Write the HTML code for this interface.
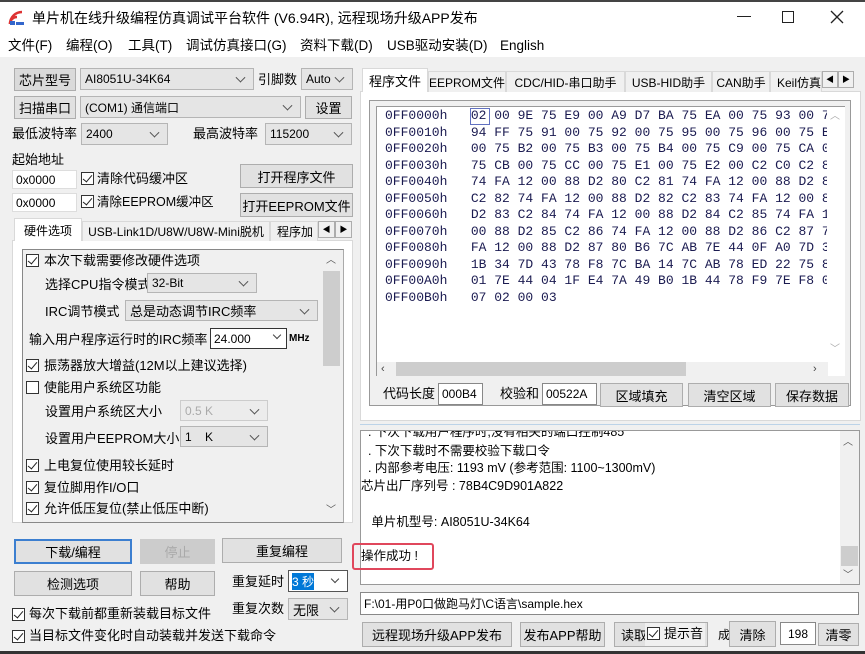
<!DOCTYPE html>
<html><head><meta charset="utf-8"><style>
*{box-sizing:border-box;margin:0;padding:0}
body{width:865px;height:654px;overflow:hidden;background:#f0f0f0;font-family:"Liberation Sans","Noto Sans CJK SC",sans-serif;font-size:13px;color:#000;position:relative}
.a{position:absolute;white-space:nowrap;line-height:18px}
.btn{position:absolute;background:#e1e1e1;border:1px solid #adadad;text-align:center;font-size:13px;display:flex;align-items:center;justify-content:center}
.cb{position:absolute;background:#e5e5e5;border:1px solid #b5b5b5;font-size:12px;padding-left:4px;display:flex;align-items:center}
.cb::after{content:"";position:absolute;right:9px;top:50%;width:6px;height:6px;border-right:1px solid #555;border-bottom:1px solid #555;transform:translateY(-70%) rotate(45deg)}
.in{position:absolute;background:#fff;border:1px solid #7a7a7a;font-size:12px;padding-left:3px;display:flex;align-items:center}
.chk{position:absolute;width:13px;height:13px;border:1px solid #333;background:#fff}
.chk.on::after{content:"";position:absolute;left:3px;top:0px;width:4px;height:8px;border-right:1.5px solid #222;border-bottom:1.5px solid #222;transform:rotate(40deg)}
.tab{position:absolute;border:1px solid #d9d9d9;border-bottom:none;background:#f0f0f0;font-size:12px;display:flex;align-items:center;justify-content:center}
.mono{font-family:"Liberation Mono",monospace;font-size:13px;color:#1a1a50}
.m{font-size:13.5px;top:37px}
</style></head><body>
<div class="a" style="left:0;top:0;width:865px;height:57px;background:#fff;border-top:2px solid #444"></div>
<svg class="a" style="left:8px;top:10px" width="18" height="16"><path d="M2 14 A12 12 0 0 1 14 2" stroke="#d33" stroke-width="2.5" fill="none"/><path d="M2 14 A7 7 0 0 1 9 7" stroke="#d33" stroke-width="2.5" fill="none"/><rect x="2" y="11" width="5" height="4" fill="#36c"/><rect x="8" y="12" width="8" height="3" fill="#36c"/></svg>
<div class="a" style="left:32px;top:9px;font-size:14px">单片机在线升级编程仿真调试平台软件 (V6.94R), 远程现场升级APP发布</div>
<div class="a" style="left:737px;top:16px;width:14px;height:1.3px;background:#222"></div>
<div class="a" style="left:782px;top:11px;width:12px;height:12px;border:1.3px solid #222"></div>
<svg class="a" style="left:830px;top:10px" width="14" height="14"><path d="M1 1L13 13M13 1L1 13" stroke="#222" stroke-width="1.3"/></svg>
<div class="a m" style="left:8px">文件(F)</div>
<div class="a m" style="left:66px">编程(O)</div>
<div class="a m" style="left:128px">工具(T)</div>
<div class="a m" style="left:186px">调试仿真接口(G)</div>
<div class="a m" style="left:300px">资料下载(D)</div>
<div class="a m" style="left:387px">USB驱动安装(D)</div>
<div class="a m" style="left:500px;top:37px">English</div>

<div class="btn" style="left:14px;top:68px;width:62px;height:23px;background:#dadada">芯片型号</div>
<div class="cb" style="left:80px;top:68px;width:174px;height:22px">AI8051U-34K64</div>
<div class="a" style="left:258px;top:71px">引脚数</div>
<div class="cb" style="left:301px;top:68px;width:52px;height:22px">Auto</div>
<div class="btn" style="left:14px;top:96px;width:62px;height:23px">扫描串口</div>
<div class="cb" style="left:80px;top:96px;width:221px;height:22px">(COM1) 通信端口</div>
<div class="btn" style="left:305px;top:96px;width:47px;height:23px">设置</div>
<div class="a" style="left:12px;top:125px">最低波特率</div>
<div class="cb" style="left:81px;top:123px;width:87px;height:22px">2400</div>
<div class="a" style="left:193px;top:125px">最高波特率</div>
<div class="cb" style="left:265px;top:123px;width:87px;height:22px">115200</div>
<div class="a" style="left:12px;top:151px">起始地址</div>
<div class="in" style="left:12px;top:170px;width:65px;height:19px;border-color:#ddd">0x0000</div>
<div class="chk on" style="left:81px;top:172px"></div>
<div class="a" style="left:97px;top:170px">清除代码缓冲区</div>
<div class="btn" style="left:240px;top:164px;width:113px;height:24px">打开程序文件</div>
<div class="in" style="left:12px;top:193px;width:65px;height:19px;border-color:#ddd">0x0000</div>
<div class="chk on" style="left:81px;top:195px"></div>
<div class="a" style="left:97px;top:193px;font-size:12.5px">清除EEPROM缓冲区</div>
<div class="btn" style="left:240px;top:193px;width:113px;height:24px">打开EEPROM文件</div>

<div class="a" style="left:12px;top:240px;width:341px;height:283px;background:#fff;border:1px solid #d9d9d9"></div>
<div class="tab" style="left:14px;top:218px;width:68px;height:23px;background:#fff;z-index:2">硬件选项</div>
<div class="tab" style="left:82px;top:221px;width:188px;height:20px">USB-Link1D/U8W/U8W-Mini脱机</div>
<div class="tab" style="left:270px;top:221px;width:48px;height:20px;justify-content:flex-start;padding-left:6px;overflow:hidden">程序加</div>
<div class="btn" style="left:318px;top:221px;width:17px;height:17px;font-size:8px;background:#f0f0f0">◀</div>
<div class="btn" style="left:335px;top:221px;width:17px;height:17px;font-size:8px;background:#f0f0f0">▶</div>
<div class="a" style="left:22px;top:249px;width:322px;height:274px;border:1px solid #888;border-right-color:#aaa;background:#f0f0f0"></div>
<div class="a" style="left:321px;top:250px;width:22px;height:272px;background:#f0f0f0"></div>
<div class="a" style="left:323px;top:271px;width:17px;height:95px;background:#cdcdcd"></div>
<div class="a" style="left:326px;top:252px;font-size:10px;color:#555">︿</div>
<div class="a" style="left:326px;top:502px;font-size:10px;color:#555">﹀</div>
<div class="chk on" style="left:26px;top:254px"></div><div class="a" style="left:44px;top:252px">本次下载需要修改硬件选项</div>
<div class="a" style="left:45px;top:276px">选择CPU指令模式</div>
<div class="cb" style="left:147px;top:273px;width:110px;height:20px">32-Bit</div>
<div class="a" style="left:45px;top:303px">IRC调节模式</div>
<div class="cb" style="left:125px;top:300px;width:193px;height:21px;font-size:13px">总是动态调节IRC频率</div>
<div class="a" style="left:29px;top:331px">输入用户程序运行时的IRC频率</div>
<div class="in" style="left:210px;top:328px;width:77px;height:21px;border-color:#333;background:#fff">24.000</div>
<div class="a" style="left:274px;top:332px;width:6px;height:6px;border-right:1px solid #444;border-bottom:1px solid #444;transform:rotate(45deg)"></div>
<div class="a" style="left:289px;top:330px;font-size:10px;font-weight:bold">MHz</div>
<div class="chk on" style="left:26px;top:359px"></div><div class="a" style="left:44px;top:357px">振荡器放大增益(12M以上建议选择)</div>
<div class="chk" style="left:26px;top:381px"></div><div class="a" style="left:44px;top:379px">使能用户系统区功能</div>
<div class="a" style="left:45px;top:403px">设置用户系统区大小</div>
<div class="cb" style="left:180px;top:400px;width:88px;height:21px;color:#aaa;background:#ececec;border-color:#ccc">0.5 K</div>
<div class="a" style="left:45px;top:430px">设置用户EEPROM大小</div>
<div class="cb" style="left:180px;top:426px;width:88px;height:21px">1 &nbsp;&nbsp;&nbsp;K</div>
<div class="chk on" style="left:26px;top:459px"></div><div class="a" style="left:44px;top:457px">上电复位使用较长延时</div>
<div class="chk on" style="left:26px;top:481px"></div><div class="a" style="left:44px;top:479px">复位脚用作I/O口</div>
<div class="chk on" style="left:26px;top:502px"></div><div class="a" style="left:44px;top:500px">允许低压复位(禁止低压中断)</div>

<div class="btn" style="left:14px;top:539px;width:118px;height:25px;border:2px solid #3c7fd0">下载/编程</div>
<div class="btn" style="left:140px;top:539px;width:75px;height:25px;color:#aaa;background:#ccc;border-color:#ccc">停止</div>
<div class="btn" style="left:222px;top:538px;width:120px;height:25px">重复编程</div>
<div class="btn" style="left:14px;top:571px;width:118px;height:25px">检测选项</div>
<div class="btn" style="left:140px;top:571px;width:75px;height:25px">帮助</div>
<div class="a" style="left:232px;top:573px">重复延时</div>
<div class="in" style="left:288px;top:570px;width:60px;height:22px;border-color:#555"><span style="background:#0078d7;color:#fff">3 秒</span></div>
<div class="a" style="left:332px;top:576px;width:6px;height:6px;border-right:1px solid #444;border-bottom:1px solid #444;transform:rotate(45deg)"></div>
<div class="a" style="left:232px;top:600px">重复次数</div>
<div class="cb" style="left:288px;top:598px;width:60px;height:22px;font-size:13px">无限</div>
<div class="chk on" style="left:12px;top:608px"></div><div class="a" style="left:29px;top:605px">每次下载前都重新装载目标文件</div>
<div class="chk on" style="left:12px;top:630px"></div><div class="a" style="left:29px;top:627px">当目标文件变化时自动装载并发送下载命令</div>

<div class="a" style="left:360px;top:91px;width:501px;height:330px;background:#fff;border:1px solid #d9d9d9"></div>
<div class="tab" style="left:362px;top:68px;width:66px;height:24px;background:#fff;z-index:2;font-size:13px">程序文件</div>
<div class="tab" style="left:428px;top:71px;width:78px;height:21px">EEPROM文件</div>
<div class="tab" style="left:506px;top:71px;width:119px;height:21px">CDC/HID-串口助手</div>
<div class="tab" style="left:625px;top:71px;width:87px;height:21px">USB-HID助手</div>
<div class="tab" style="left:712px;top:71px;width:58px;height:21px">CAN助手</div>
<div class="tab" style="left:770px;top:71px;width:52px;height:21px;justify-content:flex-start;padding-left:6px;overflow:hidden">Keil仿真</div>
<div class="btn" style="left:822px;top:71px;width:16px;height:17px;font-size:8px;background:#f0f0f0">◀</div>
<div class="btn" style="left:838px;top:71px;width:16px;height:17px;font-size:8px;background:#f0f0f0">▶</div>
<div class="a" style="left:369px;top:100px;width:482px;height:306px;border:1px solid #999;background:#f0f0f0"></div>
<div class="a" style="left:376px;top:106px;width:469px;height:270px;background:#fff;border-top:1px solid #999;border-left:1px solid #999"></div>
<div class="a" style="left:827px;top:107px;width:18px;height:255px;background:#fff"></div>
<div class="a" style="left:830px;top:108px;font-size:10px;color:#aaa">︿</div>
<div class="a" style="left:830px;top:341px;font-size:10px;color:#aaa">﹀</div>
<div class="a" style="left:377px;top:362px;width:451px;height:14px;background:#f0f0f0"></div>
<div class="a" style="left:396px;top:362px;width:290px;height:14px;background:#cdcdcd"></div>
<div class="a" style="left:381px;top:360px;font-size:11px;color:#444">‹</div>
<div class="a" style="left:813px;top:360px;font-size:11px;color:#444">›</div>
<div class="a" style="left:470px;top:108px;width:20px;height:17px;border:1px solid #6070c0"></div>
<div class="a mono" style="left:385px;top:108px;line-height:16.5px;width:442px;overflow:hidden">
0FF0000h&nbsp;&nbsp;&nbsp;02 00 9E 75 E9 00 A9 D7 BA 75 EA 00 75 93 00 75<br>
0FF0010h&nbsp;&nbsp;&nbsp;94 FF 75 91 00 75 92 00 75 95 00 75 96 00 75 B5<br>
0FF0020h&nbsp;&nbsp;&nbsp;00 75 B2 00 75 B3 00 75 B4 00 75 C9 00 75 CA 00<br>
0FF0030h&nbsp;&nbsp;&nbsp;75 CB 00 75 CC 00 75 E1 00 75 E2 00 C2 C0 C2 80<br>
0FF0040h&nbsp;&nbsp;&nbsp;74 FA 12 00 88 D2 80 C2 81 74 FA 12 00 88 D2 81<br>
0FF0050h&nbsp;&nbsp;&nbsp;C2 82 74 FA 12 00 88 D2 82 C2 83 74 FA 12 00 88<br>
0FF0060h&nbsp;&nbsp;&nbsp;D2 83 C2 84 74 FA 12 00 88 D2 84 C2 85 74 FA 12<br>
0FF0070h&nbsp;&nbsp;&nbsp;00 88 D2 85 C2 86 74 FA 12 00 88 D2 86 C2 87 74<br>
0FF0080h&nbsp;&nbsp;&nbsp;FA 12 00 88 D2 87 80 B6 7C AB 7E 44 0F A0 7D 33<br>
0FF0090h&nbsp;&nbsp;&nbsp;1B 34 7D 43 78 F8 7C BA 14 7C AB 78 ED 22 75 81<br>
0FF00A0h&nbsp;&nbsp;&nbsp;01 7E 44 04 1F E4 7A 49 B0 1B 44 78 F9 7E F8 00<br>
0FF00B0h&nbsp;&nbsp;&nbsp;07 02 00 03</div>
<div class="a" style="left:383px;top:385px">代码长度</div>
<div class="in" style="left:438px;top:383px;width:45px;height:22px;border-color:#888">000B4</div>
<div class="a" style="left:500px;top:385px">校验和</div>
<div class="in" style="left:542px;top:383px;width:55px;height:22px;border-color:#888">00522A</div>
<div class="btn" style="left:600px;top:383px;width:83px;height:24px">区域填充</div>
<div class="btn" style="left:688px;top:383px;width:83px;height:24px">清空区域</div>
<div class="btn" style="left:775px;top:383px;width:74px;height:24px">保存数据</div>

<div class="a" style="left:360px;top:424px;width:500px;height:1px;background:#bcd3e8"></div>
<div class="a" style="left:360px;top:430px;width:500px;height:155px;background:#fff;border:1px solid #999;overflow:hidden"></div>
<div class="a" style="left:840px;top:431px;width:19px;height:153px;background:#f0f0f0"></div>
<div class="a" style="left:841px;top:546px;width:17px;height:20px;background:#cdcdcd"></div>
<div class="a" style="left:843px;top:434px;font-size:10px;color:#555">︿</div>
<div class="a" style="left:843px;top:567px;font-size:10px;color:#555">﹀</div>
<div class="a" style="left:361px;top:431px;width:478px;height:153px;overflow:hidden;font-size:12.5px">
<div class="a" style="left:0;top:-8px">&nbsp;&nbsp;. 下次下载用户程序时,没有相关的端口控制485</div>
<div class="a" style="left:0;top:11px">&nbsp;&nbsp;. 下次下载时不需要校验下载口令</div>
<div class="a" style="left:0;top:28px">&nbsp;&nbsp;. 内部参考电压: 1193 mV (参考范围: 1100~1300mV)</div>
<div class="a" style="left:0;top:46px">芯片出厂序列号 : 78B4C9D901A822</div>
<div class="a" style="left:0;top:82px">&nbsp;&nbsp;&nbsp;单片机型号: AI8051U-34K64</div>
<div class="a" style="left:0;top:116px">操作成功 !</div>
</div>
<div class="a" style="left:352px;top:543px;width:82px;height:27px;border:2.5px solid #e0475c;border-radius:3px"></div>
<div class="in" style="left:360px;top:592px;width:499px;height:23px;border-color:#888;font-size:12px">F:\01-用P0口做跑马灯\C语言\sample.hex</div>
<div class="btn" style="left:362px;top:622px;width:150px;height:25px">远程现场升级APP发布</div>
<div class="btn" style="left:520px;top:622px;width:85px;height:25px">发布APP帮助</div>
<div class="btn" style="left:614px;top:622px;width:94px;height:25px;justify-content:flex-start;padding-left:6px">读取</div>
<div class="a" style="left:645px;top:623px;width:60px;height:23px;background:#f0f0f0"></div>
<div class="chk on" style="left:647px;top:627px"></div><div class="a" style="left:664px;top:625px">提示音</div>
<div class="a" style="left:718px;top:626px;font-size:12px">成</div>
<div class="btn" style="left:729px;top:621px;width:47px;height:26px">清除</div>
<div class="in" style="left:780px;top:622px;width:36px;height:23px;justify-content:center;padding:0;border-color:#888">198</div>
<div class="btn" style="left:818px;top:623px;width:41px;height:23px">清零</div>
<div class="a" style="left:0;top:651px;width:865px;height:3px;background:#333"></div>
</body></html>
